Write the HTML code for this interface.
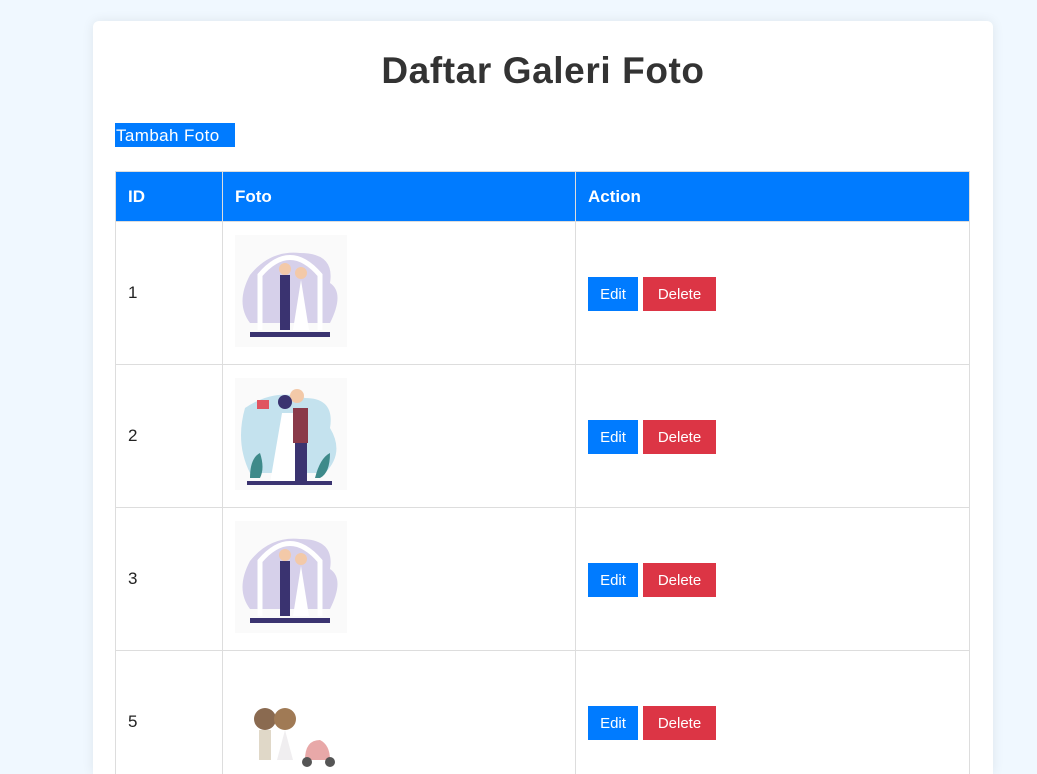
<!DOCTYPE html>
<html style="overflow:hidden;height:774px"><head><meta charset="utf-8"><style>
*{box-sizing:border-box}
body{margin:0;background:#f0f8ff;font-family:"Liberation Sans",sans-serif;width:1037px;height:774px;overflow:hidden;position:relative}
.card{position:absolute;left:93px;top:21px;width:900px;height:753px;background:#fff;border-radius:6px 6px 0 0;box-shadow:0 0 12px rgba(0,0,0,.08);overflow:hidden}
h1{position:absolute;left:0;width:900px;top:29px;margin:0;text-align:center;font-size:37px;font-weight:bold;color:#333;letter-spacing:0.6px}
.add{position:absolute;left:22px;top:102px;width:120px;height:24px;line-height:25px;padding:0 1px;background:#007bff;color:#fff;font-size:17px;letter-spacing:0.4px;white-space:nowrap}
table{position:absolute;left:22px;top:150px;width:855px;border-collapse:collapse}
th{background:#007bff;color:#fff;text-align:left;font-size:17px;font-weight:600;height:50px;padding:0 12px;border:1px solid #ddd}
td{height:143px;border:1px solid #ddd;padding:0 12px;font-size:17px;color:#222}
.b{display:inline-block;height:34px;line-height:35px;color:#fff;font-size:15px;text-align:center;vertical-align:middle;position:relative;top:1px}
.e{background:#007bff;width:50px;margin-right:5px}.d{background:#dc3545;width:73px}
svg{display:block;margin-top:-4px}
</style></head><body>
<div class="card">
<h1>Daftar Galeri Foto</h1>
<div class="add">Tambah Foto</div>
<table>
<tr><th style="width:107px">ID</th><th style="width:353px">Foto</th><th>Action</th></tr>
<tr><td>1</td><td><svg width="112" height="112"><rect width="112" height="112" fill="#fafafa"/><path d="M15 40 q20-25 50-22 q35 0 30 30 q15 10 0 40 l-80 0 q-15-20 0-48z" fill="#d6d0ea"/><path d="M25 95 v-55 q30-35 60 0 v55" fill="none" stroke="#fff" stroke-width="5"/><rect x="45" y="40" width="10" height="55" fill="#3a3370"/><circle cx="50" cy="34" r="6" fill="#f3c9a8"/><path d="M58 95 l8-50 l8 50z" fill="#fff"/><circle cx="66" cy="38" r="6" fill="#f3c9a8"/><rect x="15" y="97" width="80" height="5" fill="#3a3370"/></svg></td><td><span class="b e">Edit</span><span class="b d">Delete</span></td></tr>
<tr><td>2</td><td><svg width="112" height="112"><rect width="112" height="112" fill="#fafafa"/><path d="M10 30 q30-20 60-10 q30 0 25 30 q15 25 -5 45 l-75 0 q-15-30 -5-65z" fill="#c4e2ee"/><path d="M35 105 l12-70 l15 0 l8 70z" fill="#fff"/><rect x="58" y="30" width="15" height="35" fill="#8a3a4a"/><rect x="60" y="65" width="12" height="38" fill="#3a3370"/><circle cx="62" cy="18" r="7" fill="#f3c9a8"/><circle cx="50" cy="24" r="7" fill="#3a3370"/><rect x="22" y="22" width="12" height="9" fill="#e05460"/><path d="M15 100 q0-20 10-25 q5 15 0 25z M80 100 q5-20 15-25 q0 20-10 25z" fill="#3e8a8a"/><rect x="12" y="103" width="85" height="4" fill="#3a3370"/></svg></td><td><span class="b e">Edit</span><span class="b d">Delete</span></td></tr>
<tr><td>3</td><td><svg width="112" height="112"><rect width="112" height="112" fill="#fafafa"/><path d="M15 40 q20-25 50-22 q35 0 30 30 q15 10 0 40 l-80 0 q-15-20 0-48z" fill="#d6d0ea"/><path d="M25 95 v-55 q30-35 60 0 v55" fill="none" stroke="#fff" stroke-width="5"/><rect x="45" y="40" width="10" height="55" fill="#3a3370"/><circle cx="50" cy="34" r="6" fill="#f3c9a8"/><path d="M58 95 l8-50 l8 50z" fill="#fff"/><circle cx="66" cy="38" r="6" fill="#f3c9a8"/><rect x="15" y="97" width="80" height="5" fill="#3a3370"/></svg></td><td><span class="b e">Edit</span><span class="b d">Delete</span></td></tr>
<tr><td>5</td><td><svg width="112" height="112"><rect width="112" height="112" fill="#fff"/><circle cx="30" cy="55" r="11" fill="#8a6a50"/><circle cx="50" cy="55" r="11" fill="#a07a55"/><rect x="24" y="66" width="12" height="30" fill="#e0d8c8"/><path d="M42 96 l8-30 l8 30z" fill="#f0eef0"/><path d="M70 96 q0-20 15-20 q10 5 10 20z" fill="#e8a8a8"/><circle cx="72" cy="98" r="5" fill="#555"/><circle cx="95" cy="98" r="5" fill="#555"/></svg></td><td><span class="b e">Edit</span><span class="b d">Delete</span></td></tr>
</table>
</div>
</body></html>
